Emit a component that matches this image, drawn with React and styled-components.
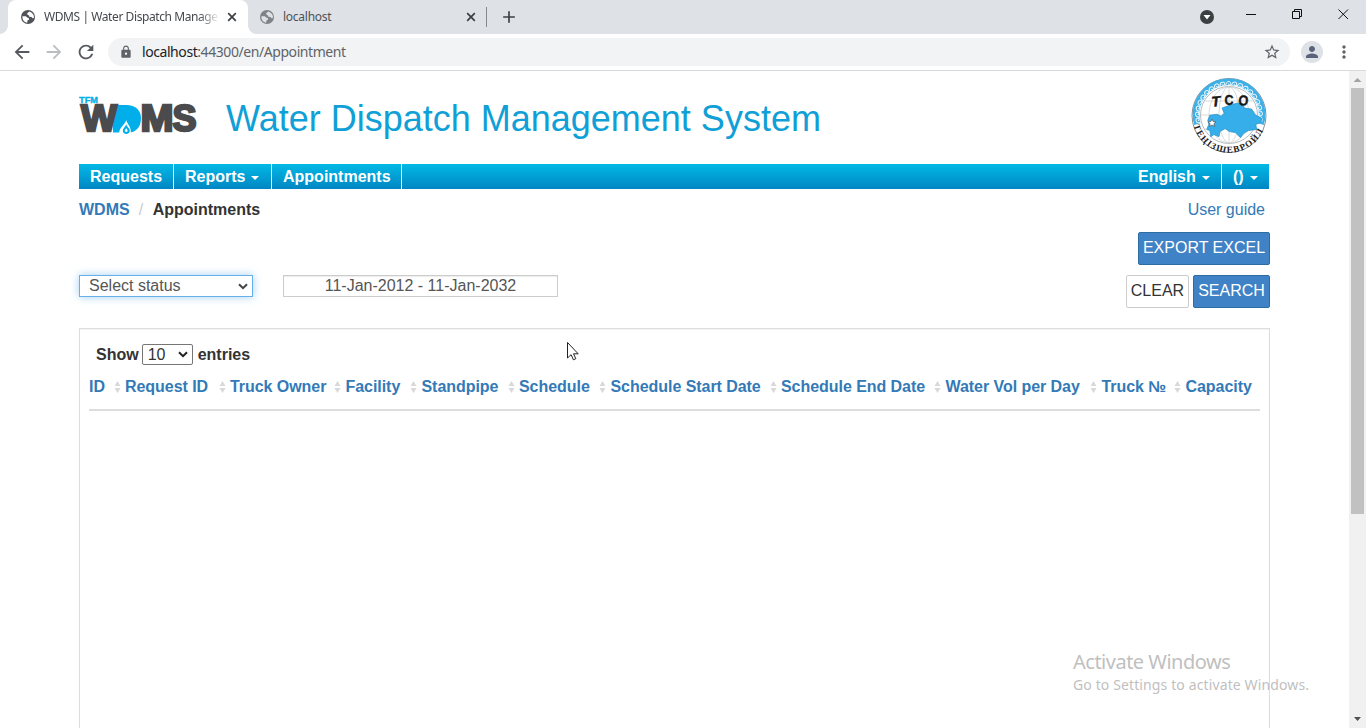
import React from 'react';
import styled, { createGlobalStyle } from 'styled-components';
import {
  MdAdd, MdArrowBack, MdArrowForward, MdRefresh,
  MdLock, MdStarBorder, MdPerson, MdMoreVert,
} from 'react-icons/md';

const Global = createGlobalStyle`
  * { box-sizing: border-box; }
  body { margin: 0; overflow: hidden; background: #fff; }
  svg { display: block; flex: none; }
`;

const ui = `"Noto Sans", "Open Sans", sans-serif`;
const web = `"Liberation Sans", Arial, sans-serif`;

const Window = styled.div`
  width: 1366px;
  height: 728px;
  display: flex;
  flex-direction: column;
  overflow: hidden;
  position: relative;
  background: #fff;
`;

/* ---------- browser chrome ---------- */
const TabStrip = styled.div`
  height: 34px;
  flex: none;
  background: #dee1e6;
  display: flex;
  padding-left: 8px;
`;
const Tab = styled.div`
  position: relative;
  width: ${p => p.$width}px;
  height: 34px;
  padding: 0 ${p => p.$end}px 0 ${p => p.$pad}px;
  display: flex;
  align-items: center;
  background: ${p => (p.$active ? '#fff' : 'transparent')};
  border-radius: 8px 8px 0 0;
  color: ${p => (p.$active ? '#45484c' : '#4d5156')};
  font: 12px ${ui};
  ${p => p.$active && `
    &::before, &::after {
      content: ''; position: absolute; bottom: 0; width: 8px; height: 8px;
    }
    &::before { left: -8px; background: radial-gradient(circle at 0 0, transparent 7.5px, #fff 8px); }
    &::after { right: -8px; background: radial-gradient(circle at 100% 0, transparent 7.5px, #fff 8px); }
  `}
`;
const TabTitle = styled.span`
  flex: 1;
  margin: 0 0 0 9px;
  padding-bottom: 1px;
  white-space: nowrap;
  letter-spacing: ${p => p.$spacing}px;
  ${p => p.$fade && 'mask-image: linear-gradient(to right, #000 155px, transparent 176px);'}
`;
const TabDivider = styled.div`
  width: 1px;
  height: 20px;
  margin-top: 7px;
  background: #85888d;
`;
const NewTab = styled.div`
  margin: 7px 0 0 12px;
  color: #3c4043;
`;
const WindowControls = styled.div`
  margin-left: auto;
  display: flex;
`;
const AddressRow = styled.div`
  height: 37px;
  flex: none;
  border-bottom: 1px solid #d9dadc;
  display: flex;
  align-items: center;
  padding: 0 11px;
`;
const NavIcon = styled.div`
  width: 32px;
  color: ${p => (p.$dim ? '#bbbdc0' : '#55585d')};
`;
const AddressBar = styled.div`
  width: 1182px;
  height: 28px;
  margin-left: 1px;
  padding: 0 9px 0 11px;
  border-radius: 14px;
  background: #f1f3f4;
  display: flex;
  align-items: center;
  color: #5f6368;
  font: 14px ${ui};
`;
const Url = styled.span`
  margin-left: 9px;
  padding-bottom: 1px;
  flex: 1;
  letter-spacing: -0.43px;
  b { font-weight: 400; color: #202124; }
`;
const Avatar = styled.div`
  width: 22px;
  height: 22px;
  margin: 0 11px 0 11px;
  border-radius: 50%;
  background: #dee1e6;
  color: #59637a;
  display: flex;
  align-items: center;
  justify-content: center;
`;

/* ---------- page ---------- */
const Viewport = styled.div`
  flex: 1;
  min-height: 0;
  display: flex;
`;
const Page = styled.main`
  width: 1349px;
  padding: 0 79px;
  display: flex;
  flex-direction: column;
  font: 16px/20px ${web};
  color: #333;
`;
const Scrollbar = styled.div`
  width: 17px;
  background: #f1f1f1;
  display: flex;
  flex-direction: column;
  align-items: center;
  justify-content: space-between;
`;
const ScrollThumb = styled.div`
  width: 13px;
  height: 426px;
  margin: 0 0 auto 0;
  background: #c1c1c1;
`;
const Header = styled.header`
  height: 93px;
  flex: none;
  display: flex;
  align-items: flex-start;
`;
const Title = styled.h1`
  margin: 26px 0 0 25px;
  flex: 1;
  font: 400 36px/44px ${web};
  color: #109fd6;
  white-space: nowrap;
`;
const EmblemSlot = styled.div`margin: 5px 2px 0 0;`;
const Menu = styled.nav`
  width: 1190px;
  height: 25px;
  flex: none;
  display: flex;
  background: linear-gradient(#02b9e6, #0086c3);
`;
const MenuItem = styled.a`
  width: ${p => p.$width}px;
  padding-left: 11px;
  display: flex;
  align-items: center;
  color: #fff;
  font-weight: 700;
  line-height: 25px;
  border-right: ${p => (p.$last ? 0 : 1)}px solid #fff;
  margin-left: ${p => (p.$right ? 'auto' : 0)};
`;
const Caret = styled.i`
  margin: 3px 0 0 6px;
  border: 4px solid transparent;
  border-top-color: #fff;
  border-bottom: 0;
`;
const Crumbs = styled.div`
  height: 43px;
  flex: none;
  padding: 11px 5px 0 0;
  display: flex;
  font-weight: 700;
`;
const CrumbLink = styled.a`
  color: #337ab7;
  font-weight: ${p => (p.$plain ? 400 : 700)};
  margin-left: ${p => (p.$plain ? 'auto' : 0)};
`;
const Slash = styled.span`
  width: 23px;
  padding-left: 9px;
  color: #ccc;
  font-weight: 400;
`;
const CurrentCrumb = styled.span`color: #333;`;
const ButtonRow = styled.div`
  height: 43px;
  flex: none;
  display: flex;
  justify-content: flex-end;
  gap: 4px;
`;
const Button = styled.button`
  width: ${p => p.$width}px;
  height: 33px;
  padding: 0 0 1px;
  border: 1px solid ${p => (p.$primary ? '#2e6da4' : '#ccc')};
  border-radius: 2px;
  background: ${p => (p.$primary ? '#4082c6' : '#fff')};
  color: ${p => (p.$primary ? '#fff' : '#333')};
  font: 16px/20px ${web};
  white-space: nowrap;
`;
const Filters = styled.div`
  height: 53px;
  flex: none;
  display: flex;
`;
const StatusSelect = styled.div`
  width: 174px;
  height: 22px;
  padding: 0 4px 0 9px;
  border: 1px solid #66afe9;
  box-shadow: 0 0 8px rgba(102, 175, 233, 0.6);
  display: flex;
  align-items: center;
  justify-content: space-between;
  color: #555;
`;
const DateRange = styled.div`
  width: 275px;
  height: 22px;
  margin-left: 30px;
  border: 1px solid #ccc;
  box-shadow: inset 0 1px 1px rgba(0, 0, 0, 0.075);
  color: #555;
  text-align: center;
`;
const FilterButtons = styled.div`
  margin-left: auto;
  display: flex;
  gap: 4px;
`;
const Panel = styled.section`
  flex: 1;
  border: 1px solid #ddd;
  border-bottom: 0;
  box-shadow: inset 0 1px 1px rgba(0, 0, 0, 0.05);
  padding: 15px 9px 0;
`;
const Length = styled.div`
  height: 21px;
  padding-left: 7px;
  display: flex;
  align-items: center;
  font-weight: 700;
`;
const LengthSelect = styled.span`
  width: 51px;
  height: 21px;
  margin: 0 5px 0 3px;
  padding: 0 4px 0 5px;
  border: 1px solid #767676;
  border-radius: 2px;
  display: flex;
  align-items: center;
  justify-content: space-between;
  font-weight: 400;
`;
const TableHead = styled.div`
  height: 46px;
  padding: 12px 0 0;
  border-bottom: 2px solid #ddd;
  display: flex;
  white-space: nowrap;
`;
const Column = styled.div`
  width: ${p => p.$width}px;
  flex: none;
  padding-right: 4.500px;
  display: flex;
  justify-content: space-between;
  font-weight: 700;
  color: #337ab7;
  letter-spacing: -0.05px;
`;
const SortMark = styled.svg`margin-top: 4px;`;

const Watermark = styled.div`
  position: absolute;
  left: 1073px;
  top: 650px;
  color: #bfbfbf;
  font: 14px/22px ${ui};
  white-space: nowrap;
`;
const WatermarkTitle = styled.div`
  font-size: 20px;
  line-height: 24px;
  letter-spacing: -0.5px;
`;
const WatermarkText = styled.div`letter-spacing: 0.12px;`;
const Pointer = styled.svg`
  position: absolute;
  left: 566px;
  top: 341px;
`;

const Globe = ({ color, land }) => (
  <svg width="14" height="14" viewBox="0 0 14 14">
    <circle cx="7" cy="7" r="7" fill={color} />
    <path d="M8.300 1.500 6.200 3.200l.3 1.600 1.600.6.2 1.300 2.300.3.900 1.200 1.500-.4c.2-2.700-1.700-5.500-4.700-6.300z" fill={land} />
    <path d="M1.400 6.200h3.400l1.700 1.500 1.300.3.300 1.600-1.600.9-.3 2.200c-2.900-.3-5-3-4.800-6.500z" fill={land} />
  </svg>
);

const Chevron = ({ color }) => (
  <svg width="10" height="7" viewBox="0 0 10 7">
    <path d="M1 1.200 5 5.200 9 1.200" fill="none" stroke={color} strokeWidth="2" />
  </svg>
);

const TabClose = () => (
  <svg width="14" height="14" viewBox="0 0 14 14">
    <path d="M3.200 3.200l7.600 7.600M10.800 3.200l-7.600 7.600" stroke="#3c4043" strokeWidth="1.700" />
  </svg>
);

const Logo = () => (
  <svg width="122" height="93" viewBox="79 71 122 93">
    <path d="M113 104.900h13c10 0 15 5.500 15 13.300 0 8-4 13-11 14.300H113z" fill="#00aeea" />
    <path d="M126.200 120c.8 4 5.200 6.500 4.600 13h-11.600c0-6 6.200-8.500 7-13z" fill="#fff" />
    <path d="M126.200 124.200c.6 2.400 3.600 4 3.600 6.600 0 4.200-7 4.200-7 0 0-2.600 2.800-4.200 3.400-6.600z" fill="#00aeea" />
    <path d="M126.200 128c.4 1.200 1.500 1.700 1.500 2.800 0 1.500-2.900 1.500-2.900 0 0-1.100 1.100-1.600 1.400-2.800z" fill="#fff" />
    <text x="79" y="103.300" fontFamily="Liberation Sans" fontWeight="700" fontSize="8.500" fill="#00aeea" stroke="#00aeea" strokeWidth=".3" textLength="19" lengthAdjust="spacingAndGlyphs">TFM</text>
    <g fontFamily="Liberation Sans" fontWeight="700" fontSize="36" fill="#4b4b4d" stroke="#4b4b4d" strokeWidth="2.400">
      <text x="81" y="130.800" textLength="36" lengthAdjust="spacingAndGlyphs">W</text>
      <text x="140.500" y="130.800" textLength="33" lengthAdjust="spacingAndGlyphs">M</text>
      <text x="172.500" y="130.800" textLength="24" lengthAdjust="spacingAndGlyphs">S</text>
    </g>
  </svg>
);

const curls = Array.from({ length: 19 }, (_, i) => -99 + i * 11);

const Emblem = () => (
  <svg width="78" height="78" viewBox="0 0 78 78">
    <defs><path id="rim" d="M5.500 49A34.800 34.800 0 0 0 73 48" /></defs>
    <circle cx="39" cy="39.500" r="37" fill="#fff" stroke="#8b8f92" strokeWidth="1" />
    <path d="M7.300 48A33 33 0 1 1 70.700 48" fill="none" stroke="#3eb0e8" strokeWidth="6.500" />
    <g fill="none" stroke="#e8f6fd" strokeWidth="1">
      {curls.map(a => (
        <path key={a} transform={`rotate(${a} 39 39)`} d="M36 8.200c0-3.200 4.600-3.600 4.800-.9 0 1.900-2.800 1.900-2.700.2M36 8.200c.5 1-1 .9-1.500.2" />
      ))}
    </g>
    <g fill="none" stroke="#cdd0d2" strokeWidth=".8">
      <circle cx="39" cy="39" r="28.500" stroke="#a5a9ac" />
      <ellipse cx="39" cy="39" rx="10" ry="28" />
      <ellipse cx="39" cy="39" rx="20" ry="28" />
      <path d="M39 11v56M11 39h56M15 25h48M15 53h48" />
    </g>
    <path transform="translate(3.500 1.500) scale(1.020)" d="M14 42l2-5 7-1 4 2 3-3-2-5 8-3 7-2 5 1 2 4 7 1 4 6 6 3-1 4-5 2 1 5-8 1-5 3-3 4-5-5-6-1-4-3-5 3-1 5-5-2-3 2-1-6-3-1 2-5z" fill="#35aee9" stroke="#278fc5" strokeWidth=".7" />
    <path d="M22 43l1.200 2.600 2.800.2-2.100 1.900.8 2.800-2.700-1.500-2.500 1.500.6-2.800-2.100-1.900 2.800-.2z" fill="#fff" stroke="#555" strokeWidth=".7" />
    <g fontFamily="Liberation Sans" fontWeight="700" fontSize="14.500" fill="#171717" stroke="#171717" strokeWidth=".4">
      <text transform="translate(21 31) rotate(-6) skewX(-12)" textLength="9" lengthAdjust="spacingAndGlyphs">T</text>
      <text transform="translate(34.500 29)" textLength="9" lengthAdjust="spacingAndGlyphs">C</text>
      <text transform="translate(48 29) rotate(5)" textLength="10" lengthAdjust="spacingAndGlyphs">O</text>
    </g>
    <text fontFamily="Liberation Serif" fontWeight="700" fontSize="9" fill="#222" dominantBaseline="middle">
      <textPath href="#rim" textLength="86" lengthAdjust="spacing">ТЕҢІЗШЕВРОЙЛ</textPath>
    </text>
  </svg>
);

const columns = [
  ['ID', 36], ['Request ID', 105], ['Truck Owner', 115.500], ['Facility', 76],
  ['Standpipe', 97.500], ['Schedule', 91.500], ['Schedule Start Date', 170.500],
  ['Schedule End Date', 164.500], ['Water Vol per Day', 156], ['Truck №', 84], ['Capacity', 74],
];

export default function App() {
  return (
    <Window>
      <Global />
      <TabStrip>
        <Tab $active $width={240} $pad={13} $end={9}>
          <Globe color="#505357" land="#fff" />
          <TabTitle $fade $spacing={-0.42}>WDMS | Water Dispatch Manage</TabTitle>
          <TabClose />
        </Tab>
        <Tab $width={238} $pad={12} $end={8}>
          <Globe color="#808386" land="#dee1e6" />
          <TabTitle $spacing={-0.25}>localhost</TabTitle>
          <TabClose />
        </Tab>
        <TabDivider />
        <NewTab><MdAdd size={20} /></NewTab>
        <WindowControls>
          <svg width="168" height="34" viewBox="1198 0 168 34">
            <circle cx="1207" cy="17" r="7" fill="#3c4043" />
            <path d="M1203.500 15h7l-3.500 4.500z" fill="#fff" />
            <g fill="none" stroke="#111">
              <path d="M1246 14.500h10M1292.500 11.500h7v7h-7zM1294.500 11.500v-2h7v7h-2M1338.500 9.500l9.500 9.500M1348 9.500l-9.500 9.500" />
            </g>
          </svg>
        </WindowControls>
      </TabStrip>
      <AddressRow>
        <NavIcon><MdArrowBack size={22} /></NavIcon>
        <NavIcon $dim><MdArrowForward size={22} /></NavIcon>
        <NavIcon><MdRefresh size={22} /></NavIcon>
        <AddressBar>
          <MdLock size={14} />
          <Url><b>localhost</b>:44300/en/Appointment</Url>
          <MdStarBorder size={18} />
        </AddressBar>
        <Avatar><MdPerson size={18} /></Avatar>
        <MdMoreVert size={20} color="#5f6368" />
      </AddressRow>

      <Viewport>
        <Page>
          <Header>
            <Logo />
            <Title>Water Dispatch Management System</Title>
            <EmblemSlot><Emblem /></EmblemSlot>
          </Header>
          <Menu>
            <MenuItem $width={95}>Requests</MenuItem>
            <MenuItem $width={98}>Reports<Caret /></MenuItem>
            <MenuItem $width={130}>Appointments</MenuItem>
            <MenuItem $width={95} $right>English<Caret /></MenuItem>
            <MenuItem $width={47} $last>()<Caret /></MenuItem>
          </Menu>
          <Crumbs>
            <CrumbLink>WDMS</CrumbLink>
            <Slash>/</Slash>
            <CurrentCrumb>Appointments</CurrentCrumb>
            <CrumbLink $plain>User guide</CrumbLink>
          </Crumbs>
          <ButtonRow><Button $primary $width={132}>EXPORT EXCEL</Button></ButtonRow>
          <Filters>
            <StatusSelect>Select status<Chevron color="#444" /></StatusSelect>
            <DateRange>11-Jan-2012 - 11-Jan-2032</DateRange>
            <FilterButtons>
              <Button $width={63}>CLEAR</Button>
              <Button $primary $width={77}>SEARCH</Button>
            </FilterButtons>
          </Filters>
          <Panel>
            <Length>
              Show
              <LengthSelect>10<Chevron color="#222" /></LengthSelect>
              entries
            </Length>
            <TableHead>
              {columns.map(([name, width], i) => (
                <Column key={name} $width={width}>
                  {name}
                  {i < columns.length - 1 && (
                    <SortMark width="7" height="12" viewBox="0 0 7 12">
                      <path d="M3.500 0 6.500 5h-6zM3.500 12 6.500 7h-6z" fill="#d9d9d9" />
                    </SortMark>
                  )}
                </Column>
              ))}
            </TableHead>
          </Panel>
        </Page>
        <Scrollbar>
          <svg width="17" height="17"><path d="M4.500 11 8.500 7l4 4z" fill="#a3a3a3" /></svg>
          <ScrollThumb />
          <svg width="17" height="17"><path d="M5 6h7L8.500 10z" fill="#505050" /></svg>
        </Scrollbar>
      </Viewport>

      <Watermark>
        <WatermarkTitle>Activate Windows</WatermarkTitle>
        <WatermarkText>Go to Settings to activate Windows.</WatermarkText>
      </Watermark>
      <Pointer width="14" height="20" viewBox="0 0 14 20">
        <path d="M1.500 1.500v15.500l3.600-3.300 2.300 5.100 2.400-1.100-2.300-4.900h4.700z" fill="#fff" stroke="#222" />
      </Pointer>
    </Window>
  );
}
